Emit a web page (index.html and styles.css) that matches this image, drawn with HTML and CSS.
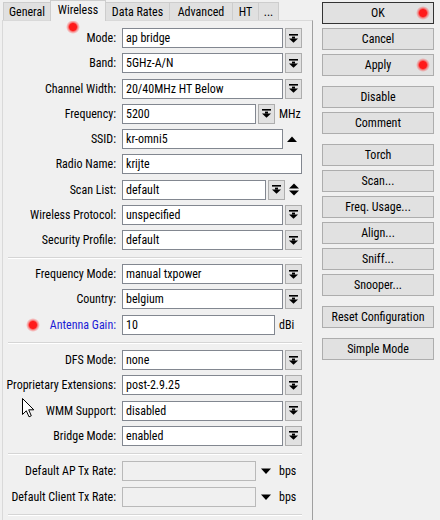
FILE: index.html
```html
<!DOCTYPE html>
<html>
<head>
<meta charset="utf-8">
<link rel="stylesheet" href="styles.css">
</head>
<body>
<div class="win">
  <div class="left">
    <div class="tabs">
      <div class="tab t-gen">General</div>
      <div class="tab t-wir sel">Wireless</div>
      <div class="tab t-dr">Data Rates</div>
      <div class="tab t-adv">Advanced</div>
      <div class="tab t-ht">HT</div>
      <div class="tab t-more">...</div>
    </div>
    <div class="panel">
      <div class="row"><span class="lbl">Mode:</span><div class="inp w-dd">ap bridge</div><div class="dd"><svg width="9" height="9" viewBox="0 0 9 9"><rect x="0" y="0" width="9" height="1.6"/><rect x="3" y="2.6" width="3" height="2"/><polygon points="0,4.4 9,4.4 4.5,8.8"/></svg></div></div>
      <div class="row"><span class="lbl">Band:</span><div class="inp w-dd">5GHz-A/N</div><div class="dd"><svg width="9" height="9" viewBox="0 0 9 9"><rect x="0" y="0" width="9" height="1.6"/><rect x="3" y="2.6" width="3" height="2"/><polygon points="0,4.4 9,4.4 4.5,8.8"/></svg></div></div>
      <div class="row"><span class="lbl">Channel Width:</span><div class="inp w-dd">20/40MHz HT Below</div><div class="dd"><svg width="9" height="9" viewBox="0 0 9 9"><rect x="0" y="0" width="9" height="1.6"/><rect x="3" y="2.6" width="3" height="2"/><polygon points="0,4.4 9,4.4 4.5,8.8"/></svg></div></div>
      <div class="row"><span class="lbl">Frequency:</span><div class="inp w-unit">5200</div><div class="dd"><svg width="9" height="9" viewBox="0 0 9 9"><rect x="0" y="0" width="9" height="1.6"/><rect x="3" y="2.6" width="3" height="2"/><polygon points="0,4.4 9,4.4 4.5,8.8"/></svg></div><span class="unit">MHz</span></div>
      <div class="row"><span class="lbl">SSID:</span><div class="inp w-dd">kr-omni5</div><div class="side"><svg width="10" height="6" viewBox="0 0 10 6"><polygon points="0,6 10,6 5,0.5"/></svg></div></div>
      <div class="row"><span class="lbl">Radio Name:</span><div class="inp w-full">krijte</div></div>
      <div class="row"><span class="lbl">Scan List:</span><div class="inp w-scan">default</div><div class="dd"><svg width="9" height="9" viewBox="0 0 9 9"><rect x="0" y="0" width="9" height="1.6"/><rect x="3" y="2.6" width="3" height="2"/><polygon points="0,4.4 9,4.4 4.5,8.8"/></svg></div><div class="side"><svg width="10" height="13" viewBox="0 0 10 13"><polygon points="0,5.5 10,5.5 5,0.5"/><polygon points="0,7.5 10,7.5 5,12.5"/></svg></div></div>
      <div class="row"><span class="lbl">Wireless Protocol:</span><div class="inp w-dd">unspecified</div><div class="dd"><svg width="9" height="9" viewBox="0 0 9 9"><rect x="0" y="0" width="9" height="1.6"/><rect x="3" y="2.6" width="3" height="2"/><polygon points="0,4.4 9,4.4 4.5,8.8"/></svg></div></div>
      <div class="row"><span class="lbl">Security Profile:</span><div class="inp w-dd">default</div><div class="dd"><svg width="9" height="9" viewBox="0 0 9 9"><rect x="0" y="0" width="9" height="1.6"/><rect x="3" y="2.6" width="3" height="2"/><polygon points="0,4.4 9,4.4 4.5,8.8"/></svg></div></div>

      <div class="sep"></div>

      <div class="row"><span class="lbl">Frequency Mode:</span><div class="inp w-dd">manual txpower</div><div class="dd"><svg width="9" height="9" viewBox="0 0 9 9"><rect x="0" y="0" width="9" height="1.6"/><rect x="3" y="2.6" width="3" height="2"/><polygon points="0,4.4 9,4.4 4.5,8.8"/></svg></div></div>
      <div class="row"><span class="lbl">Country:</span><div class="inp w-dd">belgium</div><div class="dd"><svg width="9" height="9" viewBox="0 0 9 9"><rect x="0" y="0" width="9" height="1.6"/><rect x="3" y="2.6" width="3" height="2"/><polygon points="0,4.4 9,4.4 4.5,8.8"/></svg></div></div>
      <div class="row"><span class="lbl blue">Antenna Gain:</span><div class="inp w-gain">10</div><span class="unit">dBi</span></div>

      <div class="sep sep2"></div>

      <div class="row"><span class="lbl">DFS Mode:</span><div class="inp w-dd">none</div><div class="dd"><svg width="9" height="9" viewBox="0 0 9 9"><rect x="0" y="0" width="9" height="1.6"/><rect x="3" y="2.6" width="3" height="2"/><polygon points="0,4.4 9,4.4 4.5,8.8"/></svg></div></div>
      <div class="row"><span class="lbl">Proprietary Extensions:</span><div class="inp w-dd">post-2.9.25</div><div class="dd"><svg width="9" height="9" viewBox="0 0 9 9"><rect x="0" y="0" width="9" height="1.6"/><rect x="3" y="2.6" width="3" height="2"/><polygon points="0,4.4 9,4.4 4.5,8.8"/></svg></div></div>
      <div class="row"><span class="lbl">WMM Support:</span><div class="inp w-dd">disabled</div><div class="dd"><svg width="9" height="9" viewBox="0 0 9 9"><rect x="0" y="0" width="9" height="1.6"/><rect x="3" y="2.6" width="3" height="2"/><polygon points="0,4.4 9,4.4 4.5,8.8"/></svg></div></div>
      <div class="row"><span class="lbl">Bridge Mode:</span><div class="inp w-dd">enabled</div><div class="dd"><svg width="9" height="9" viewBox="0 0 9 9"><rect x="0" y="0" width="9" height="1.6"/><rect x="3" y="2.6" width="3" height="2"/><polygon points="0,4.4 9,4.4 4.5,8.8"/></svg></div></div>

      <div class="sep sep3"></div>

      <div class="row r-last"><span class="lbl">Default AP Tx Rate:</span><div class="inp w-unit dis"></div><div class="arr"><svg width="10" height="6" viewBox="0 0 10 6"><polygon points="0,0.5 10,0.5 5,6"/></svg></div><span class="unit">bps</span></div>
      <div class="row"><span class="lbl">Default Client Tx Rate:</span><div class="inp w-unit dis"></div><div class="arr"><svg width="10" height="6" viewBox="0 0 10 6"><polygon points="0,0.5 10,0.5 5,6"/></svg></div><span class="unit">bps</span></div>

      <div class="sep"></div>
    </div>
  </div>

  <div class="right">
    <div class="btn ok">OK</div>
    <div class="btn">Cancel</div>
    <div class="btn">Apply</div>
    <div class="btn grp">Disable</div>
    <div class="btn">Comment</div>
    <div class="btn grp">Torch</div>
    <div class="btn">Scan...</div>
    <div class="btn">Freq. Usage...</div>
    <div class="btn">Align...</div>
    <div class="btn">Sniff...</div>
    <div class="btn">Snooper...</div>
    <div class="btn grp">Reset Configuration</div>
    <div class="btn grp">Simple Mode</div>
  </div>
</div>

<div class="dot dot-tab"></div>
<div class="dot dot-ok"></div>
<div class="dot dot-apply"></div>
<div class="dot dot-gain"></div>

<svg class="cursor" width="13" height="20" viewBox="0 0 13 20"><path d="M0.5,0.5 L0.5,16.5 L4.3,12.8 L7,18.8 L9.3,17.8 L6.7,11.8 L11.8,11.8 Z" fill="#fff" stroke="#000" stroke-width="1" stroke-linejoin="miter"/></svg>
</body>
</html>
```

FILE: styles.css
```css
* { box-sizing: border-box; }

body {
  margin: 0;
  width: 440px;
  height: 520px;
  overflow: hidden;
  position: relative;
  background: #f0f0f0;
  color: #000;
  font-family: "Liberation Sans Narrow", "Roboto Condensed", "Noto Sans", sans-serif;
  font-stretch: condensed;
  font-size: 12px;
}

.win {
  display: flex;
  align-items: flex-start;
}

.left {
  width: 313px;
  flex: none;
}

/* tabs */
.tabs {
  display: flex;
  align-items: flex-end;
  height: 20px;
  padding-left: 3px;
}

.tab {
  height: 18px;
  margin-right: -1px;
  border: 1px solid #cdcdcd;
  border-bottom: none;
  background: #e0e0e0;
  display: flex;
  align-items: center;
  justify-content: center;
  white-space: nowrap;
}

.tab.sel {
  height: 21px;
  margin-bottom: -1px;
  background: #f0f0f0;
  position: relative;
  z-index: 1;
  padding-bottom: 3px;
}

.t-gen { width: 48px; }
.t-wir { width: 56px; }
.t-dr { width: 65px; }
.t-adv { width: 64px; }
.t-ht { width: 27px; }
.t-more { width: 21px; }

/* panel */
.panel {
  margin-left: 2px;
  height: 500px;
  border-top: 1px solid #d9d9d9;
  border-left: 1px solid #d9d9d9;
  border-right: 1px solid #a0a0a0;
  padding-top: 7px;
  display: flex;
  flex-direction: column;
}

.row {
  display: flex;
  align-items: center;
  height: 20px;
  flex: none;
  margin-bottom: 5.25px;
}

.row.r-last { margin-bottom: 6px; }

.lbl {
  width: 113px;
  flex: none;
  margin-right: 6px;
  text-align: right;
  white-space: nowrap;
}

.lbl.blue { color: #1c1cd6; }

.inp {
  height: 20px;
  flex: none;
  border: 1px solid #828790;
  background: #fff;
  padding-left: 3px;
  line-height: 18px;
  white-space: nowrap;
  overflow: hidden;
}

.inp.dis {
  background: #f0f0f0;
  border-color: #b9b9b9;
}

.w-dd { width: 161px; }
.w-full { width: 180px; }
.w-unit { width: 134px; }
.w-scan { width: 144px; }
.w-gain { width: 153px; }

.dd {
  width: 17px;
  height: 20px;
  flex: none;
  margin-left: 2px;
  border: 1px solid #adadad;
  background: #e1e1e1;
  display: flex;
  align-items: center;
  justify-content: center;
}

.side {
  width: 17px;
  height: 20px;
  flex: none;
  display: flex;
  align-items: center;
  justify-content: center;
}

.arr {
  width: 20px;
  height: 20px;
  flex: none;
  display: flex;
  align-items: center;
  justify-content: center;
}

.unit {
  margin-left: 4px;
  white-space: nowrap;
}

.arr + .unit { margin-left: 3px; }

.sep {
  height: 2px;
  flex: none;
  margin: 1.75px 10px 5px 5px;
  border-top: 1px solid #d5d5d5;
  border-bottom: 1px solid #ffffff;
}

.sep2 { margin-top: 2.5px; margin-bottom: 5.75px; }
.sep3 { margin-top: 2.25px; margin-bottom: 5.25px; }

/* buttons */
.right {
  width: 112px;
  flex: none;
  margin-left: 9px;
  padding-top: 2px;
  display: flex;
  flex-direction: column;
}

.btn {
  height: 22px;
  flex: none;
  margin-bottom: 4px;
  border: 1px solid #adadad;
  background: #e1e1e1;
  display: flex;
  align-items: center;
  justify-content: center;
  white-space: nowrap;
}

.btn.ok { border-color: #333; }

.btn.grp { margin-top: 6px; }

/* overlays */
.dot {
  position: absolute;
  width: 14px;
  height: 14px;
  border-radius: 50%;
  background: radial-gradient(circle, #ff1a1a 0, #ff1a1a 3.5px, rgba(255, 40, 40, 0.45) 5px, rgba(255, 60, 60, 0) 7px);
}

.dot-tab { left: 66px; top: 20px; }
.dot-ok { left: 416px; top: 6px; }
.dot-apply { left: 416px; top: 58px; }
.dot-gain { left: 26px; top: 318px; }

.cursor {
  position: absolute;
  left: 22px;
  top: 398px;
}
```
